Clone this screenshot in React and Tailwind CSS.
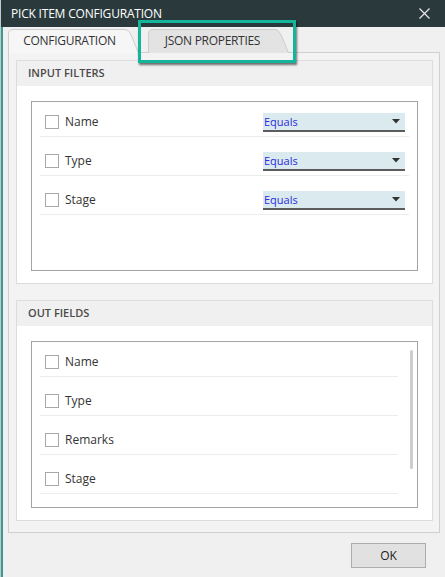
import React from 'react'

const FILTERS = ['Name', 'Type', 'Stage']
const OUT_FIELDS = ['Name', 'Type', 'Remarks', 'Stage']

function Checkbox() {
  return <div className="w-[14px] h-[14px] border border-[#a9a9a9] bg-white shrink-0" />
}

function Dropdown() {
  return (
    <div className="w-[142px] h-[19px] bg-[#daeaee] border-b-2 border-[#5c5c5c] flex items-center justify-between pl-[1px] pr-[5px]">
      <span className="text-[11px] text-[#2b2bdc] leading-none">Equals</span>
      <svg width="8" height="5" viewBox="0 0 8 5">
        <path d="M0 0 L8 0 L4 4.5 Z" fill="#333" />
      </svg>
    </div>
  )
}

function Row({ label, children }) {
  return (
    <div className="mx-[8px] mb-[10px] border-b border-[#ececec]">
      <div className="h-[28px] flex items-center pl-[5px] pr-[4px]">
        <Checkbox />
        <span className="ml-[6px] text-[12px] text-[#333]">{label}</span>
        <div className="ml-auto">{children}</div>
      </div>
    </div>
  )
}

function GroupBox({ title, className, children }) {
  return (
    <div className={`border border-[#dcdcdc] bg-white flex flex-col ${className}`}>
      <div className="h-[25px] bg-[#f0f0f0] flex items-center pl-[11px] text-[11px] font-semibold text-[#4a4a4a]">
        {title}
      </div>
      <div className="flex-1 flex flex-col pl-[14px] pr-[14px] pt-[15px] pb-[12px]">{children}</div>
    </div>
  )
}

function TabShape({ w, fill, stroke }) {
  return (
    <svg className="absolute inset-0" width={w} height="24" viewBox={`0 0 ${w} 24`}>
      <path
        d={`M0.5 24 L0.5 5 Q0.5 0.5 5 0.5 L${w - 14} 0.5 Q${w - 10} 0.5 ${w - 7} 8 L${w - 0.5} 24`}
        fill={fill}
        stroke={stroke}
      />
    </svg>
  )
}

export default function App() {
  return (
    <div className="w-[445px] h-[577px] flex bg-[#b9cdd2] font-['Open_Sans','Noto_Sans',sans-serif]">
      <div className="w-[1px] shrink-0" />
      <div className="flex-1 flex flex-col bg-[#f0f0f0] border-l-2 border-[#3c9a8c] relative">
        {/* title bar */}
        <div className="h-[27px] bg-[#2a3a3c] flex items-center justify-between pl-[7px] pr-[15px] -ml-[2px]">
          <span className="text-[12px] text-white tracking-[-0.2px] pl-[3px]">PICK ITEM CONFIGURATION</span>
          <svg width="11" height="11" viewBox="0 0 11 11">
            <path d="M0.5 0.5 L10.5 10.5 M10.5 0.5 L0.5 10.5" stroke="#e8e8e8" strokeWidth="1.2" />
          </svg>
        </div>

        {/* tabs */}
        <div className="flex items-end h-[25px] pl-[5px] relative z-10">
          <div className="relative w-[131px] h-[24px] flex items-center justify-center pr-[8px] -mb-[1px]">
            <TabShape w={131} fill="#f6f6f6" stroke="#cdcdcd" />
            <span className="relative text-[12px] text-[#333] tracking-[-0.3px]">CONFIGURATION</span>
          </div>
          <div className="relative w-[141px] h-[23px] ml-[9px] flex items-center justify-center pr-[12px]">
            <TabShape w={141} fill="#e3e3e3" stroke="#cdcdcd" />
            <span className="relative text-[12px] text-[#333] tracking-[-0.3px] pt-[1px]">JSON PROPERTIES</span>
          </div>
        </div>

        {/* highlight around json tab */}
        <div className="absolute left-[135px] top-[20px] w-[158px] h-[43px] border-[3px] border-[#14b59b] shadow-[1px_2px_2px_rgba(0,0,0,0.55)] z-20" />

        {/* tab page */}
        <div className="ml-[5px] mr-[5px] h-[481px] border border-[#cfcfcf] bg-[#f3f3f3] pl-[7px] pr-[6px] pt-[7px] flex flex-col">
          <GroupBox title="INPUT FILTERS" className="h-[224px]">
            <div className="flex-1 border border-[#a3a3a3] bg-white pt-[6px]">
              {FILTERS.map((f) => (
                <Row key={f} label={f}>
                  <Dropdown />
                </Row>
              ))}
            </div>
          </GroupBox>

          <GroupBox title="OUT FIELDS" className="h-[221px] mt-[16px]">
            <div className="flex-1 border border-[#a3a3a3] bg-white pt-[6px] pr-[11px] relative">
              {OUT_FIELDS.map((f) => (
                <Row key={f} label={f} />
              ))}
              <div className="absolute right-[4px] top-[8px] w-[3px] h-[119px] rounded-full bg-[#cdcdcd]" />
            </div>
          </GroupBox>
        </div>

        {/* footer */}
        <div className="flex-1 flex justify-end items-start pt-[10px] pr-[19px]">
          <button className="w-[75px] h-[25px] bg-[#e1e1e1] border border-[#adadad] text-[12px] text-[#222]">
            OK
          </button>
        </div>
      </div>
    </div>
  )
}
